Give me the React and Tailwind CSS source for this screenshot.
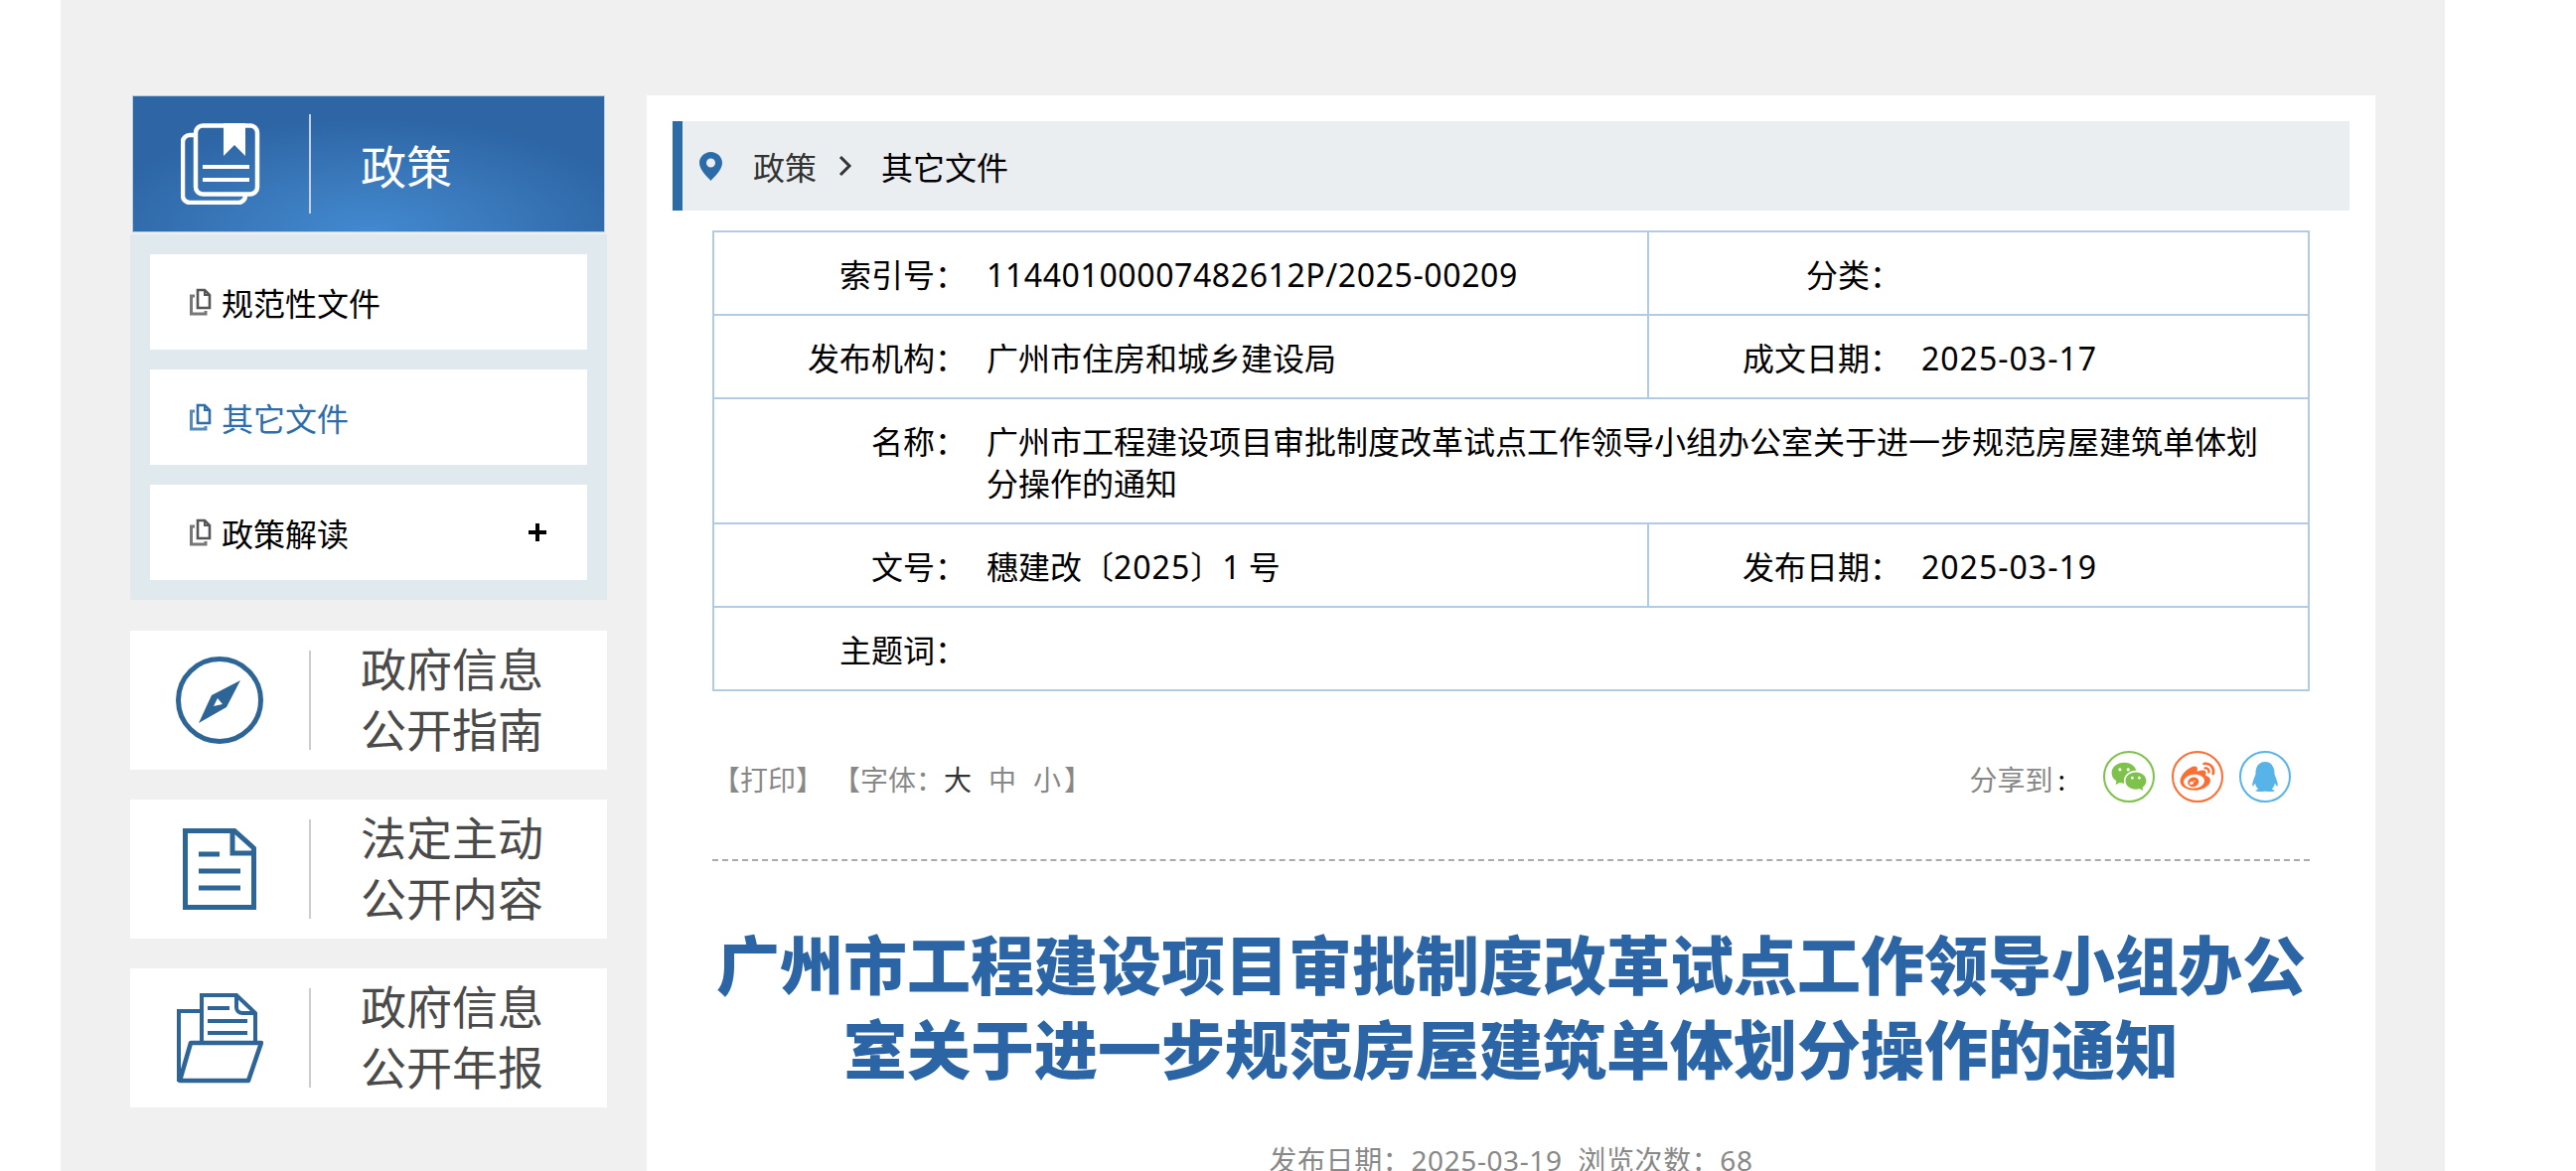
import React from "react";
import { RiWechatFill, RiWeiboFill, RiQqFill } from "react-icons/ri";

const FONT = "font-['Noto_Sans','Noto_Sans_CJK_SC','Microsoft_YaHei',sans-serif]";

function BookIcon() {
  return (
    <svg width="80" height="82" viewBox="0 0 80 82" fill="none" stroke="#fff" strokeWidth="4.5">
      <rect x="15" y="2.500" width="62" height="69" rx="7" />
      <path d="M13 12H9a7 7 0 0 0-7 7v54a7 7 0 0 0 7 7h49a7 7 0 0 0 7-7" />
      <path d="M43 0h22v33L54 22 43 33z" fill="#fff" stroke="none" />
      <path d="M22 44h47M22 57h47" strokeWidth="4" />
    </svg>
  );
}

function CompassIcon() {
  return (
    <svg width="88" height="88" viewBox="0 0 88 88" fill="none">
      <circle cx="44" cy="44" r="41.5" stroke="#2d6596" strokeWidth="5" />
      <path d="M65 24 23 67l13-28zM65 24 51 51 23 67z" fill="#2d6596" />
      <path d="M42 42l5 6-9 2z" fill="#fff" />
    </svg>
  );
}

function DocIcon() {
  return (
    <svg width="74" height="82" viewBox="0 0 74 82" fill="none" stroke="#2d6596" strokeWidth="5">
      <path d="M2.500 2.500H52L71.500 20v59.500H2.500z" />
      <path d="M50 3v22h21" />
      <path d="M16 26h21M16 43h42M16 60h42" />
    </svg>
  );
}

function FolderIcon() {
  return (
    <svg width="87" height="91" viewBox="0 0 87 91" fill="none" stroke="#2d6596" strokeWidth="4">
      <path d="M25 49V2h35l19 18v29" />
      <path d="M60 2v12a6 6 0 0 0 6 6h13" />
      <path d="M31 15h22M31 28h40M31 40h40" />
      <path d="M25 18H2v71" />
      <path d="M14 50h71L72 88H3z" strokeWidth="4.5" strokeLinejoin="round" />
    </svg>
  );
}

function CopyIcon({ color }) {
  return (
    <svg width="22" height="28" viewBox="0 0 22 28" fill="none" stroke={color}>
      <path d="M8 2h7l5 5v13H8z" strokeWidth="2.6" />
      <path d="M15 2v5h5" strokeWidth="2" />
      <path d="M5 8H1.500v18H16v-3" strokeWidth="3" opacity="0.8" />
    </svg>
  );
}

function PinIcon() {
  return (
    <svg width="23" height="29" viewBox="0 0 23 29">
      <path
        d="M11.500 0C5 0 0 5 0 11c0 7 8 14 11.500 18C15 25 23 18 23 11 23 5 18 0 11.500 0zm0 15.500a4.500 4.500 0 1 1 0-9 4.500 4.500 0 0 1 0 9z"
        fill="#2b6ca8"
      />
    </svg>
  );
}

function SideCard({ icon, lines }) {
  return (
    <div className="flex h-[140px] items-center bg-white">
      <div className="flex w-[180px] justify-center">{icon}</div>
      <div className="h-[100px] w-[2px] bg-[#cccccc]" />
      <div className="ml-[50px] pb-[2px] text-[46px] leading-[61px] text-[#4a4a4a]">
        <div>{lines[0]}</div>
        <div>{lines[1]}</div>
      </div>
    </div>
  );
}

function NavItem({ text, active, plus }) {
  return (
    <div className="flex h-[96px] items-center justify-between bg-white pl-[40px] pr-[41px]">
      <div className={`flex items-center gap-[10px] text-[32px] ${active ? "text-[#2c6daa]" : "text-black"}`}>
        <CopyIcon color={active ? "#2c6daa" : "#555555"} />
        <span className="pt-[4px]">{text}</span>
      </div>
      {plus && (
        <svg width="18" height="18" viewBox="0 0 18 18" stroke="#000" strokeWidth="4">
          <path d="M9 0v18M0 9h18" />
        </svg>
      )}
    </div>
  );
}

// label / value cells: table has only horizontal rules plus a single divider in the middle
const cell = "border-y-2 border-[#b0cbe3] pt-[22px] pb-[18px] align-top";

function InfoRow({ label, value, label2, value2 }) {
  if (label2) {
    return (
      <tr>
        <td className={`${cell} border-l-2 text-right`}>{label}</td>
        <td className={`${cell} border-r-2 pl-[20px]`}>{value}</td>
        <td className={`${cell} text-right`}>{label2}</td>
        <td className={`${cell} border-r-2 pl-[20px] tracking-[1px]`}>{value2}</td>
      </tr>
    );
  }
  return (
    <tr>
      <td className={`${cell} border-l-2 text-right`}>{label}</td>
      <td colSpan={3} className={`${cell} border-r-2 pl-[20px]`}>
        <div className="w-[1282px]">{value}</div>
      </td>
    </tr>
  );
}

function InfoTable() {
  return (
    <table className="ml-[66px] mt-[20px] w-[1606px] table-fixed border-collapse text-[32px] leading-[42px] text-black">
      <colgroup>
        <col className="w-[255px]" />
        <col className="w-[686px]" />
        <col className="w-[255px]" />
        <col className="w-[410px]" />
      </colgroup>
      <tbody>
        <InfoRow
          label="索引号："
          value={<span className="tracking-[0.6px]">11440100007482612P/2025-00209</span>}
          label2="分类："
          value2=" "
        />
        <InfoRow label="发布机构：" value="广州市住房和城乡建设局" label2="成文日期：" value2="2025-03-17" />
        <InfoRow label="名称：" value="广州市工程建设项目审批制度改革试点工作领导小组办公室关于进一步规范房屋建筑单体划分操作的通知" />
        <InfoRow
          label="文号："
          value={
            <>
              穗建改〔<span className="tracking-[1px]">2025</span>〕1 号
            </>
          }
          label2="发布日期："
          value2="2025-03-19"
        />
        <InfoRow label="主题词：" value="" />
      </tbody>
    </table>
  );
}

function Toolbar() {
  return (
    <div className="ml-[66px] flex h-[171px] w-[1608px] items-center justify-between border-b-2 border-dashed border-[#aaaaaa] pt-[9px] text-[28px] text-[#888888]">
      <div className="flex">
        <span>【打印】</span>
        <span className="ml-[9px]">【字体：</span>
        <span className="text-[#333333]">大</span>
        <span className="ml-[17px]">中</span>
        <span className="ml-[17px]">小</span>
        <span className="ml-[3px]">】</span>
      </div>
      <div className="mr-[19px] flex items-center">
        <span className="ml-[1px]">分享到</span>
        <b className="ml-[5px] font-normal text-black">:</b>
        <span className="mb-[6px] ml-[38px] flex h-[52px] w-[52px] items-center justify-center rounded-full border-2 border-[#7dc24b] text-[#7dc24b]">
          <RiWechatFill size={38} />
        </span>
        <span className="mb-[6px] ml-[17px] flex h-[52px] w-[52px] items-center justify-center rounded-full border-2 border-[#fb6e33] text-[#fb6e33]">
          <RiWeiboFill size={38} />
        </span>
        <span className="mb-[6px] ml-[16px] flex h-[52px] w-[52px] items-center justify-center rounded-full border-2 border-[#58b3e8] text-[#58b3e8]">
          <RiQqFill size={36} />
        </span>
      </div>
    </div>
  );
}

export default function App() {
  return (
    <div className={`h-screen overflow-hidden bg-white ${FONT}`}>
      <div className="ml-[61px] flex h-full w-[2400px] bg-[#f0f0f0] pl-[70px] pt-[96px]">
        {/* Left column */}
        <div className="w-[480px] shrink-0">
          <div className="mx-[2px] flex h-[138px] items-center border border-[#b5cde3] bg-[radial-gradient(ellipse_60%_85%_at_50%_100%,#4289d0_0%,#3c7dc0_35%,#2d65a5_100%)]">
            <div className="flex w-[177px] justify-center pr-[2px]">
              <BookIcon />
            </div>
            <div className="h-[100px] w-[2px] bg-[#c5d3e0]" />
            <div className="ml-[50px] pt-[5px] text-[46px] text-white">政策</div>
          </div>
          <div className="mt-[2px] flex flex-col gap-[20px] bg-[#dfe9ee] p-[20px]">
            <NavItem text="规范性文件" />
            <NavItem text="其它文件" active />
            <NavItem text="政策解读" plus />
          </div>
          <div className="mt-[31px] flex flex-col gap-[30px]">
            <SideCard icon={<CompassIcon />} lines={["政府信息", "公开指南"]} />
            <SideCard icon={<DocIcon />} lines={["法定主动", "公开内容"]} />
            <SideCard icon={<FolderIcon />} lines={["政府信息", "公开年报"]} />
          </div>
        </div>

        {/* Main column */}
        <div className="ml-[40px] w-[1740px] shrink-0 bg-white pt-[26px]">
          <div className="ml-[26px] flex h-[90px] w-[1688px] items-center border-l-[10px] border-[#2b6ca8] bg-[#ebeef1] pl-[17px] text-[32px]">
            <PinIcon />
            <span className="ml-[31px] pt-[4px] text-[#333333]">政策</span>
            <svg className="ml-[21px]" width="16" height="22" viewBox="0 0 16 22" fill="none" stroke="#333" strokeWidth="3">
              <path d="M3 2l9 9-9 9" />
            </svg>
            <span className="ml-[28px] pt-[4px] text-black">其它文件</span>
          </div>
          <InfoTable />
          <Toolbar />
          <h1 className="ml-[66px] mt-[62px] w-[1608px] text-center text-[64px] font-black leading-[85px] text-[#2b65a5]">
            广州市工程建设项目审批制度改革试点工作领导小组办公室关于进一步规范房屋建筑单体划分操作的通知
          </h1>
          <div className="mt-[58px] text-center text-[28px] leading-[22px] tracking-[0.6px] text-[#888888]">发布日期：2025-03-19&nbsp;&nbsp;浏览次数：68</div>
        </div>
      </div>
    </div>
  );
}
